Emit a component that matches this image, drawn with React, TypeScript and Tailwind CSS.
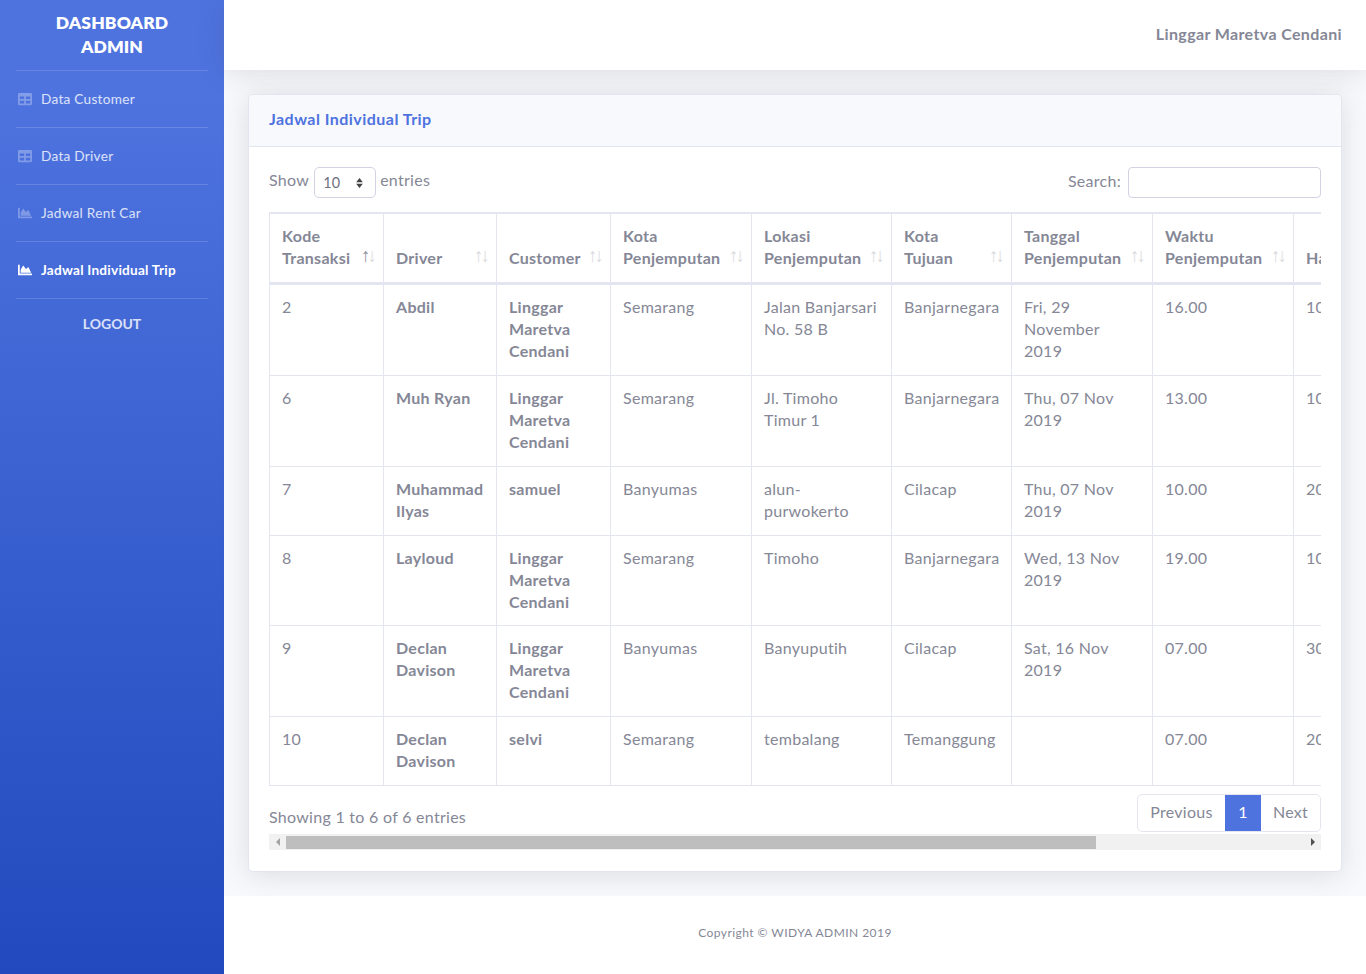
import React from 'react';
import { FaTable, FaChartArea } from 'react-icons/fa';

const menu = [
  { label: 'Data Customer', Icon: FaTable, active: false },
  { label: 'Data Driver', Icon: FaTable, active: false },
  { label: 'Jadwal Rent Car', Icon: FaChartArea, active: false },
  { label: 'Jadwal Individual Trip', Icon: FaChartArea, active: true },
];

const columns = [
  { label: ['Kode', 'Transaksi'], width: 'w-[114px]' },
  { label: ['Driver'], width: 'w-[113px]' },
  { label: ['Customer'], width: 'w-[114px]' },
  { label: ['Kota', 'Penjemputan'], width: 'w-[141px]' },
  { label: ['Lokasi', 'Penjemputan'], width: 'w-[140px]' },
  { label: ['Kota', 'Tujuan'], width: 'w-[120px]' },
  { label: ['Tanggal', 'Penjemputan'], width: 'w-[141px]' },
  { label: ['Waktu', 'Penjemputan'], width: 'w-[141px]' },
  { label: ['Harga'], width: 'w-[298px]' },
];

const rows = [
  ['2', 'Abdil', 'Linggar Maretva Cendani', 'Semarang', 'Jalan Banjarsari No. 58 B', 'Banjarnegara', 'Fri, 29 November 2019', '16.00', '100000'],
  ['6', 'Muh Ryan', 'Linggar Maretva Cendani', 'Semarang', 'Jl. Timoho Timur 1', 'Banjarnegara', 'Thu, 07 Nov 2019', '13.00', '100000'],
  ['7', 'Muhammad Ilyas', 'samuel', 'Banyumas', 'alun-purwokerto', 'Cilacap', 'Thu, 07 Nov 2019', '10.00', '200000'],
  ['8', 'Layloud', 'Linggar Maretva Cendani', 'Semarang', 'Timoho', 'Banjarnegara', 'Wed, 13 Nov 2019', '19.00', '100000'],
  ['9', 'Declan Davison', 'Linggar Maretva Cendani', 'Banyumas', 'Banyuputih', 'Cilacap', 'Sat, 16 Nov 2019', '07.00', '300000'],
  ['10', 'Declan Davison', 'selvi', 'Semarang', 'tembalang', 'Temanggung', '', '07.00', '200000'],
];

const App: React.FC = () => {
  return (
    <div className="flex min-h-screen bg-[#f8f9fc] font-['Lato',sans-serif] text-[16px] tracking-[0.28px] text-[#858796]">
      {/* Sidebar */}
      <aside className="w-[224px] shrink-0 bg-gradient-to-b from-[#4e73df] from-10% to-[#224abe] px-4">
        <div className="h-[70px] pt-[11px] text-center text-[17.5px] leading-[24px] font-extrabold tracking-[0.1px] text-white">
          DASHBOARD
          <br />
          ADMIN
        </div>
        {menu.map(({ label, Icon, active }) => (
          <div key={label} className="h-[57px] border-t border-white/15">
            <div className={`flex h-[56px] items-center pl-[2px] text-[13.6px] ${active ? 'font-bold tracking-[0.24px] text-white' : 'text-white/80'}`}>
              <Icon className={`mr-[9px] h-[14px] w-[14px] ${active ? 'text-white' : 'text-white/30'}`} />
              {label}
            </div>
          </div>
        ))}
        <div className="h-[52px] border-t border-white/15 pt-[15px] text-center text-[14px] leading-[20px] font-bold tracking-normal text-white/80">
          LOGOUT
        </div>
      </aside>

      {/* Main */}
      <div className="flex min-w-0 flex-1 flex-col">
        <header className="flex h-[70px] items-center justify-end bg-white pr-6 pb-[2px] font-bold tracking-[0.37px] shadow-[0_2.4px_28px_0_rgba(58,59,69,0.15)]">
          Linggar Maretva Cendani
        </header>

        <main className="flex-1 px-6 pt-6 pb-6">
          <div className="rounded-[5px] border border-[#e3e6f0] bg-white shadow-[0_2.4px_28px_0_rgba(58,59,69,0.15)]">
            <div className="h-[52px] rounded-t-[5px] border-b border-[#e3e6f0] bg-[#f8f9fc] px-5 pt-[12px] leading-[24px] font-bold tracking-[0.46px] text-[#4e73df]">
              Jadwal Individual Trip
            </div>
            <div className="px-5 pt-5 pb-[21px]">
              <div className="overflow-hidden">
                {/* Controls */}
                <div className="mb-[14px] flex h-[31px] items-center justify-between">
                  <div className="flex items-center">
                    <span className="mb-[5px]">Show</span>
                    <div className="mr-1 ml-[5px] flex h-[31px] w-[62px] items-center justify-between rounded-[5px] border border-[#d1d3e2] pr-[12px] pl-[8px] text-[14.4px] text-[#6e707e]">
                      10
                      <svg viewBox="0 0 8 12" className="h-[10px] w-[7px] fill-[#444]">
                        <path d="M4 0 8 5H0ZM4 12 0 7H8Z" />
                      </svg>
                    </div>
                    <span className="mb-[5px]">entries</span>
                  </div>
                  <div className="flex items-center">
                    <span className="mb-[3px]">Search:</span>
                    <div className="ml-[7px] h-[31px] w-[193px] rounded-[4px] border border-[#d1d3e2]" />
                  </div>
                </div>

                {/* Table */}
                <table className="w-[1322px] table-fixed border-separate border-spacing-0 border-t-2 border-l border-[#e3e6f0] leading-[22px]">
                  <thead>
                    <tr>
                      {columns.map((col, i) => (
                        <th
                          key={col.label.join(' ')}
                          className={`${col.width} relative h-[71px] border-r border-b-[3px] border-[#e3e6f0] px-3 pb-[13px] text-left align-bottom font-bold`}
                        >
                          {col.label.map((line) => (
                            <div key={line}>{line}</div>
                          ))}
                          <span className="absolute right-[9px] bottom-[15px] font-['Liberation_Sans',sans-serif] text-[19px] leading-[22px] font-normal tracking-[-3px]">
                            <span className={i === 0 ? 'opacity-90' : 'opacity-30'}>↑</span>
                            <span className="opacity-30">↓</span>
                          </span>
                        </th>
                      ))}
                    </tr>
                  </thead>
                  <tbody>
                    {rows.map((row, r) => (
                      <tr key={row[0]}>
                        {row.map((cell, i) => (
                          <td
                            key={i}
                            className={`border-r border-b border-[#e3e6f0] px-3 pt-[11px] align-top ${r === 3 ? 'pb-3' : 'pb-[13px]'} ${i === 1 || i === 2 ? 'font-bold' : ''}`}
                          >
                            {cell}
                          </td>
                        ))}
                      </tr>
                    ))}
                  </tbody>
                </table>

                {/* Footer of the table */}
                <div className="mt-[8px] flex h-[40px] justify-between">
                  <div className="pt-[11px]">Showing 1 to 6 of 6 entries</div>
                  <div className="flex h-[38px] overflow-hidden rounded-[5px] border border-[#e3e6f0]">
                    <div className="flex w-[87px] items-center justify-center pb-[2px]">Previous</div>
                    <div className="flex w-[36px] items-center justify-center bg-[#4e73df] pb-[2px] text-white">1</div>
                    <div className="flex w-[59px] items-center justify-center pb-[2px]">Next</div>
                  </div>
                </div>

                {/* Scrollbar */}
                <div className="flex h-[16px] items-center bg-[#f1f1f1]">
                  <div className="flex w-[17px] justify-center">
                    <svg viewBox="0 0 4 8" className="h-[8px] w-[4px] fill-[#a3a3a3]">
                      <path d="M4 0V8L0 4Z" />
                    </svg>
                  </div>
                  <div className="h-[13px] w-[810px] bg-[#bebebe]" />
                  <div className="ml-auto flex w-[17px] justify-center">
                    <svg viewBox="0 0 4 8" className="h-[8px] w-[4px] fill-[#505050]">
                      <path d="M0 0V8L4 4Z" />
                    </svg>
                  </div>
                </div>
              </div>
            </div>
          </div>
        </main>

        <footer className="h-[78px] bg-white pt-[28px] text-center text-[12px] leading-[18px] tracking-[0.45px]">
          Copyright © WIDYA ADMIN 2019
        </footer>
      </div>
    </div>
  );
};

export default App;
